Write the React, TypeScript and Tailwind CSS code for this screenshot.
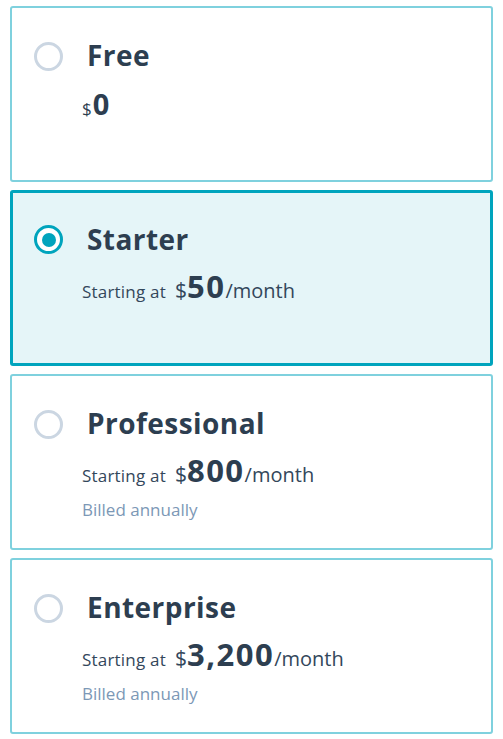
import React from 'react'

interface Plan {
  name: string
  price: string
  starting?: boolean
  billed?: boolean
}

const plans: Plan[] = [
  { name: 'Free', price: '0' },
  { name: 'Starter', price: '50', starting: true },
  { name: 'Professional', price: '800', starting: true, billed: true },
  { name: 'Enterprise', price: '3,200', starting: true, billed: true },
]

function Radio({ checked }: { checked: boolean }) {
  if (checked) {
    return (
      <div className="mt-[32px] w-[29px] h-[29px] rounded-full border-[3px] border-[#00a4bd] bg-white flex items-center justify-center shrink-0">
        <div className="w-[14px] h-[14px] rounded-full bg-[#00a4bd]"></div>
      </div>
    )
  }
  return (
    <div className="mt-[34px] w-[29px] h-[29px] rounded-full border-[3px] border-[#cbd6e2] bg-white shrink-0"></div>
  )
}

export default function App() {
  const selected = 'Starter'

  return (
    <div
      className="w-[503px] h-[739px] bg-white px-[10px] pt-[6px] flex flex-col gap-[8px]"
      style={{ fontFamily: '"Open Sans", Lato, sans-serif' }}
    >
      {plans.map((plan) => {
        const isSel = plan.name === selected
        return (
          <div
            key={plan.name}
            className={
              isSel
                ? 'h-[176px] rounded-[3px] border-[3px] border-[#00a4bd] bg-[#e5f5f8] flex items-start pl-[21px]'
                : 'h-[176px] rounded-[3px] border-2 border-[#7fd1de] bg-white flex items-start pl-[22px]'
            }
          >
            <Radio checked={isSel} />
            <div className={isSel ? 'ml-[19px] mt-[28px] flex flex-col' : 'ml-[19px] mt-[29px] flex flex-col'}>
              <div className="pl-[5px] text-[28px] leading-[36px] font-bold tracking-[0.45px] text-[#2d3e50]">
                {plan.name}
              </div>
              {plan.starting ? (
                <div className="mt-[14px] flex items-baseline text-[#33475b]">
                  <span className="text-[17px] leading-none tracking-[0.2px]">Starting at</span>
                  <span className="ml-[9px] text-[21px] leading-none">$</span>
                  <span className="text-[31px] leading-none font-bold tracking-[1.5px] text-[#2d3e50]">{plan.price}</span>
                  <span className="text-[20px] leading-none">/month</span>
                </div>
              ) : (
                <div className="mt-[16px] flex items-baseline text-[#2d3e50]">
                  <span className="text-[17px] leading-none">$</span>
                  <span className="ml-[1px] text-[29px] leading-none font-bold">{plan.price}</span>
                </div>
              )}
              {plan.billed && (
                <div className="mt-[14px] text-[17px] leading-[20px] text-[#7c98b6]">Billed annually</div>
              )}
            </div>
          </div>
        )
      })}
    </div>
  )
}
